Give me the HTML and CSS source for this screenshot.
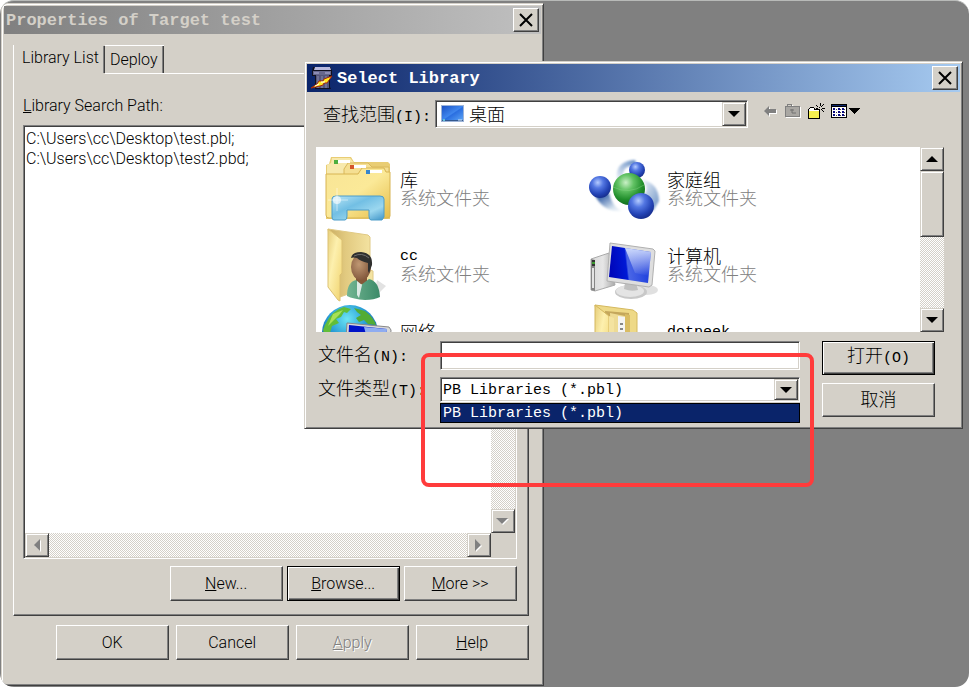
FILE: index.html
```html
<!DOCTYPE html>
<html lang="zh-CN">
<head>
<meta charset="utf-8">
<meta name="viewport" content="width=device-width, initial-scale=1">
<title>Select Library</title>
<link rel="stylesheet" href="styles.css">
</head>
<body>
<main class="desktop">

  <section class="window properties" aria-labelledby="properties-title">
    <header class="titlebar inactive">
      <h1 id="properties-title" class="title">Properties of Target test</h1>
      <button class="btn close" type="button" aria-label="Close">
        <svg width="14" height="14" viewBox="0 0 14 14"><path d="M1 1 13 13M13 1 1 13" stroke="#000" stroke-width="2"/></svg>
      </button>
    </header>

    <div class="sheet">
      <div class="tabs" role="tablist">
        <button class="tab current" type="button" role="tab" aria-selected="true">Library List</button>
        <button class="tab" type="button" role="tab" aria-selected="false">Deploy</button>
        <span class="tab-rest"></span>
      </div>
      <div class="page">
        <label class="page-label" for="paths"><u>L</u>ibrary Search Path:</label>
        <div class="sunken paths">
          <textarea id="paths" readonly>C:\Users\cc\Desktop\test.pbl;
C:\Users\cc\Desktop\test2.pbd;</textarea>
          <div class="scroll vertical">
            <button class="btn arrow" type="button" aria-label="Up" disabled><svg width="12" height="6" viewBox="0 0 12 6"><path d="M0 6 6 0 12 6z" fill="#808080"/></svg></button>
            <button class="btn arrow" type="button" aria-label="Down" disabled><svg width="13" height="7" viewBox="0 0 13 7"><path d="M1 1H13L7 7z" fill="#fff"/><path d="M0 0H12L6 6z" fill="#808080"/></svg></button>
          </div>
          <div class="scroll horizontal">
            <button class="btn arrow" type="button" aria-label="Left" disabled><svg width="7" height="13" viewBox="0 0 7 13"><path d="M7 1V13L1 7z" fill="#fff"/><path d="M6 0V12L0 6z" fill="#808080"/></svg></button>
            <button class="btn arrow" type="button" aria-label="Right" disabled><svg width="7" height="13" viewBox="0 0 7 13"><path d="M1 1V13L7 7z" fill="#fff"/><path d="M0 0V12L6 6z" fill="#808080"/></svg></button>
          </div>
        </div>
        <div class="actions">
          <button class="btn push" type="button"><u>N</u>ew...</button>
          <button class="btn push default" type="button"><u>B</u>rowse...</button>
          <button class="btn push" type="button"><u>M</u>ore &gt;&gt;</button>
        </div>
      </div>
    </div>

    <footer class="actions commands">
      <button class="btn push" type="button">OK</button>
      <button class="btn push" type="button">Cancel</button>
      <button class="btn push" type="button" disabled><u>A</u>pply</button>
      <button class="btn push" type="button"><u>H</u>elp</button>
    </footer>
  </section>

  <section class="window dialog" role="dialog" aria-labelledby="dialog-title">
    <header class="titlebar">
      <svg class="app-icon" width="22" height="24" viewBox="0 0 22 24">
        <path d="M2 1H20V3L21 4V10H19V21L20 23H4V10H1V5z" fill="#11111f"/>
        <path d="M4 1H19L20 4H3z" fill="#b9bade"/>
        <path d="M2 5H20V9H2z" fill="#66678c"/><path d="M3 7H8M14 7H19" stroke="#8c8db4" stroke-width="2"/>
        <path d="M5 9H18V22H5z" fill="#55567a"/><path d="M7 10V22M11 10V22M15 10V22" stroke="#8a8bac" stroke-width="1"/>
        <path d="M21 10 13 13 12 15 8 15 6 18 0 22 9 20 12 19 13 17 16 17z" fill="#ffe921" stroke="#a5250c" stroke-width="1"/>
        <path d="M10 16H14M4 20 8 18" stroke="#fff"/>
      </svg>
      <h2 id="dialog-title" class="title">Select Library</h2>
      <button class="btn close" type="button" aria-label="Close">
        <svg width="14" height="14" viewBox="0 0 14 14"><path d="M1 1 13 13M13 1 1 13" stroke="#000" stroke-width="2"/></svg>
      </button>
    </header>

    <div class="lookin">
      <label for="lookin">查找范围<span class="latin">(I):</span></label>
      <div class="sunken combo">
        <svg class="place" width="24" height="18" viewBox="0 0 24 18">
          <defs><linearGradient id="desk" x1="0" y1="0" x2="1" y2="1"><stop offset="0" stop-color="#1c52c4"/><stop offset=".5" stop-color="#3f86ee"/><stop offset=".55" stop-color="#2a6ee0"/><stop offset="1" stop-color="#5aa2f5"/></linearGradient></defs>
          <path d="M0 0H23V17H0z" fill="#9db4d8"/><path d="M1 1H22V15H1z" fill="url(#desk)"/><path d="M1 15H22V16H1z" fill="#34588e"/><path d="M2 14H4V16H2z" fill="#63c2d8"/><path d="M17 15H21" stroke="#cfe4f8"/>
        </svg>
        <select id="lookin" class="cjk"><option>桌面</option></select>
        <span class="btn arrow" aria-hidden="true"><svg width="12" height="6" viewBox="0 0 12 6"><path d="M0 0H12L6 6z"/></svg></span>
      </div>
      <div class="tools">
        <button type="button" aria-label="Back"><svg width="16" height="16" viewBox="0 0 16 16"><path d="M2 9 7 4V7H14V11H7V14z" fill="#fff"/><path d="M1 8 6 3V6H13V10H6V13z" fill="#808080"/></svg></button>
        <button type="button" aria-label="Up one level"><svg width="17" height="16" viewBox="0 0 17 16"><path d="M1 4H3L4 2H8L9 4H16V15H1z" fill="#fff"/><path d="M0 3H2V1H7V3H15V14H0z" fill="#808080"/><path d="M1 4H14V13H1z" fill="#a9a7a3"/><path d="M3 2H6V3H3z" fill="#d4d0c8"/><path d="M5 7H9M7 6V10H11" fill="none" stroke="#707070"/></svg></button>
        <button type="button" aria-label="New folder"><svg width="17" height="17" viewBox="0 0 17 17" shape-rendering="crispEdges"><path d="M0 6H1V5H2V4H6V5H7V6H12V16H0z"/><path d="M1 6H2V5H6V7H11V8H1z" fill="#fff"/><path d="M1 8H11V15H1z" fill="#f6f050"/><path d="M8 2H9V3H8zM9 3H10V4H9zM12 0H13V3H12zM15 1H16V2H15zM14 2H15V3H14zM13 3H14V4H13zM11 4H12V5H11zM14 5H17V6H14zM8 5H10V6H8zM13 6H14V7H13zM14 7H15V8H14zM15 8H16V9H15z"/></svg></button>
        <button type="button" aria-label="View menu"><svg width="30" height="16" viewBox="0 0 30 16" shape-rendering="crispEdges"><path d="M0 1H16V15H0z"/><path d="M1 4H15V14H1z" fill="#fff"/><path d="M1 2H15V3H1z" fill="#0a246a"/><path d="M2 5H4V7H2zM7 5H9V7H7zM11 5H13V7H11zM2 8H4V10H2zM7 8H9V10H7zM11 8H13V10H11zM2 11H4V13H2zM7 11H9V13H7zM11 11H13V13H11z" fill="#0a0a80"/><path d="M5 6H6V7H5zM9 6H10V7H9zM13 6H14V7H13zM5 9H6V10H5zM9 9H10V10H9zM13 9H14V10H13zM5 12H6V13H5zM9 12H10V13H9zM13 12H14V13H13z" fill="#444"/><path d="M18 5H29L24 11H23z"/></svg></button>
      </div>
    </div>

    <div class="files">
      <ul class="items">
        <li class="item">
          <svg width="76" height="76" viewBox="0 0 76 76">
            <defs>
              <linearGradient id="fold" x1="0" y1="0" x2="1" y2="1"><stop offset="0" stop-color="#f8e596"/><stop offset=".5" stop-color="#fbe998"/><stop offset="1" stop-color="#e5bd48"/></linearGradient>
              <linearGradient id="stand" x1="0" y1="0" x2="1" y2="1"><stop offset="0" stop-color="#bce7f6"/><stop offset=".4" stop-color="#72bfe4"/><stop offset=".7" stop-color="#9bd7ef"/><stop offset="1" stop-color="#3f94c8"/></linearGradient>
            </defs>
            <path d="M6 14 9 13 11 6H31L34 11H68L70 13V68H6z" fill="#e9cd74"/>
            <path d="M7 14 11 12 12 7H30L34 12 42 14V30H7z" fill="#f7e9ad"/>
            <path d="M24 18 28 12H48L52 16H69V32H24z" fill="#f5df92" stroke="#d9b95c" stroke-width="1"/>
            <path d="M6 23H38L42 17H64L66 21H70V65Q70 67 67 67H9Q6 67 6 64z" fill="url(#fold)" stroke="#d8b452" stroke-width="1"/>
            <path d="M14 9H30V12H14zM30 14H46V17H30zM46 19H62V22H46z" fill="#fff"/>
            <path d="M14 9H18V13H14z" fill="#4cae3e"/><path d="M30 14H34V18H30z" fill="#d4572a"/><path d="M46 19H50V23H46z" fill="#3786cd"/>
            <path d="M12 48Q12 45 16 45H60Q64 45 64 48V66L62 69H51Q49 69 49 65V59H27V65Q27 69 25 69H14Q12 69 12 66z" fill="url(#stand)" stroke="#4c9cc8" stroke-width="1"/>
            <path d="M17 37V60M8 49H28" stroke="#fff" opacity=".5"/><circle cx="17" cy="49" r="4" fill="#fff" opacity=".6"/>
          </svg>
          <p><span>库</span><small>系统文件夹</small></p>
        </li>
        <li class="item">
          <svg width="76" height="76" viewBox="0 0 76 76">
            <defs>
              <radialGradient id="blue" cx=".4" cy=".3" r=".7"><stop offset="0" stop-color="#b4cbff"/><stop offset=".35" stop-color="#5377e2"/><stop offset=".75" stop-color="#2444b6"/><stop offset="1" stop-color="#172f90"/></radialGradient>
              <radialGradient id="green" cx=".4" cy=".3" r=".7"><stop offset="0" stop-color="#c9f0c6"/><stop offset=".35" stop-color="#62c264"/><stop offset=".75" stop-color="#218e2c"/><stop offset="1" stop-color="#156e20"/></radialGradient>
              <linearGradient id="swoosh-left" x1="0" y1="0" x2="1" y2="1"><stop offset=".2" stop-color="#3d66aa"/><stop offset=".7" stop-color="#d5e2ee"/><stop offset="1" stop-color="#fff"/></linearGradient>
              <linearGradient id="swoosh-top" x1="1" y1="0" x2="0" y2="1"><stop offset="0" stop-color="#5d86bf"/><stop offset="1" stop-color="#f4f8fc"/></linearGradient>
              <linearGradient id="swoosh-right" x1="0" y1="0" x2="1" y2="1"><stop offset="0" stop-color="#f4f8fc"/><stop offset="1" stop-color="#6b91c4"/></linearGradient>
              <filter id="soft"><feGaussianBlur stdDeviation="1"/></filter>
            </defs>
            <g filter="url(#soft)">
              <path d="M8 44Q16 62 37 60Q26 58 22 42z" fill="url(#swoosh-left)"/>
              <path d="M30 30Q27 10 48 9L50 14Q36 14 36 24z" fill="url(#swoosh-top)"/>
              <path d="M54 28Q72 32 72 50L66 60Q60 48 56 44 64 38 54 28z" fill="url(#swoosh-right)"/>
            </g>
            <circle cx="50" cy="19" r="8" fill="url(#blue)"/><circle cx="13" cy="36" r="11" fill="url(#blue)"/><circle cx="42" cy="38" r="16" fill="url(#green)"/><circle cx="54" cy="55" r="13" fill="url(#blue)"/>
            <path d="M26 36Q42 44 57 34" fill="none" stroke="#8fd68c" opacity=".4"/>
          </svg>
          <p><span>家庭组</span><small>系统文件夹</small></p>
        </li>
        <li class="item">
          <svg width="76" height="76" viewBox="0 0 76 76">
            <defs>
              <linearGradient id="flap" x1="0" y1="0" x2="1" y2="1"><stop offset="0" stop-color="#e6cd7a"/><stop offset=".4" stop-color="#fdf0ae"/><stop offset="1" stop-color="#f0d26c"/></linearGradient>
              <linearGradient id="back"><stop offset="0" stop-color="#c9ad62"/><stop offset=".4" stop-color="#e2ca80"/><stop offset="1" stop-color="#f5e5a4"/></linearGradient>
              <linearGradient id="shirt"><stop offset="0" stop-color="#73b592"/><stop offset="1" stop-color="#3b8a68"/></linearGradient>
              <radialGradient id="face" cx=".4" cy=".4" r=".7"><stop offset="0" stop-color="#c09873"/><stop offset="1" stop-color="#7c5136"/></radialGradient>
            </defs>
            <path d="M53 72 66 59 57 53z" fill="#e2e2e2"/>
            <path d="M8 2 48 8 50 10V43L53 44V58L20 70z" fill="url(#back)" stroke="#e0c984" stroke-width="1"/>
            <path d="M8 2 22 13V46L20 48V74L18 73 8 60z" fill="url(#flap)" stroke="#dcc172" stroke-width="1"/>
            <path d="M36 48H47V57H36z" fill="#855839"/>
            <path d="M27 69Q27 55 36 53L41 58 49 52Q59 54 60 70Q54 73 45 73Q33 72 27 69z" fill="url(#shirt)"/>
            <path d="M37 54 42 58 39 71 37 68z" fill="#dce9e4"/>
            <ellipse cx="41" cy="40" rx="10" ry="13" fill="url(#face)"/>
            <path d="M31 31Q32 25 41 25Q53 26 52 38L49 46 48 44 48 36Q40 34 37 31Q33 30 31 31Z" fill="#30302f"/>
            <path d="M34 29Q42 25 49 31" stroke="#707070" fill="none"/>
          </svg>
          <p><span class="latin">cc</span><small>系统文件夹</small></p>
        </li>
        <li class="item">
          <svg width="76" height="76" viewBox="0 0 76 76">
            <defs>
              <linearGradient id="screen" x1="0" y1=".1" x2="1" y2="0"><stop offset="0" stop-color="#0007bb"/><stop offset=".36" stop-color="#0019d6"/><stop offset=".4" stop-color="#4a66e6"/><stop offset="1" stop-color="#1537db"/></linearGradient>
              <linearGradient id="shine" x1="0" y1="0" x2="0" y2="1"><stop offset="0" stop-color="#dce7ff" stop-opacity=".9"/><stop offset="1" stop-color="#fff" stop-opacity="0"/></linearGradient>
              <linearGradient id="tower"><stop offset="0" stop-color="#d8d8d8"/><stop offset=".5" stop-color="#e6e6e6"/><stop offset="1" stop-color="#a9a9a9"/></linearGradient>
            </defs>
            <ellipse cx="60" cy="63" rx="11" ry="5" fill="#ccc" opacity=".6"/>
            <path d="M4 32 22 26 28 58 8 64 4 63z" fill="url(#tower)" stroke="#aaa" stroke-width="1"/><path d="M4 32 8 33V64L4 63z" fill="#858585"/><path d="M5 33H8V39H5z" fill="#333"/><path d="M5 36H8" stroke="#3c9a2f" stroke-width="2"/><path d="M6 41V61" stroke="#e4e4e4" stroke-width="2"/>
            <ellipse cx="44" cy="65" rx="16" ry="7" fill="#c8c8c8"/><ellipse cx="43" cy="64" rx="14" ry="6" fill="#e4e4e4"/><path d="M38 56H49L51 63Q44 65 37 62z" fill="#c0c0c0"/>
            <path d="M23 16 66 22 68 24 65 58 62 60 20 54z" fill="#dedede" stroke="#b0b0b0" stroke-width="1"/>
            <path d="M25 19 64 25 61 56 22 50z" fill="url(#screen)"/>
            <path d="M38 21 64 25 62 49 48 46z" fill="url(#shine)"/>
          </svg>
          <p><span>计算机</span><small>系统文件夹</small></p>
        </li>
        <li class="item">
          <svg width="76" height="76" viewBox="0 0 76 76">
            <defs><radialGradient id="sea" cx=".45" cy=".25" r=".75"><stop offset="0" stop-color="#6ce5f4"/><stop offset=".45" stop-color="#289bd5"/><stop offset="1" stop-color="#103d92"/></radialGradient></defs>
            <circle cx="30" cy="30" r="28" fill="url(#sea)"/>
            <path d="M5 22Q12 7 24 4L31 6 27 10 24 9 21 14 16 16 19 20 12 23 10 30 5 33 3 27z" fill="#62bd39"/>
            <path d="M34 5 45 8Q54 15 56 22L48 21 44 17 39 19 36 15 41 12 37 9z" fill="#52ac35"/><path d="M13 11 23 7 19 12 13 18 8 23z" fill="#a8e156"/>
            <path d="M27 20 69 24 71 27 68 70 24 66z" fill="#d9d9d9" stroke="#888" stroke-width="1"/><path d="M29 22 67 26 65 66 27 62z" fill="#0013c8"/><path d="M44 24 67 26 66 45 49 43z" fill="#8facf0"/>
          </svg>
          <p><span>网络</span><small>系统文件夹</small></p>
        </li>
        <li class="item">
          <svg width="76" height="76" viewBox="0 0 76 76">
            <path d="M8 2 46 7 50 10V60L20 70z" fill="#eed987" stroke="#d5b95f" stroke-width="1"/>
            <path d="M18 8 42 10V62L20 68z" fill="#c4a75c"/><path d="M23 10 38 13V64L25 66z" fill="#eedb94"/><path d="M31 13 38 14V60H31z" fill="#f4f4f4"/><path d="M33 20H36V22H33zM33 25H36V27H33z" fill="#878787"/>
            <path d="M38 11 43 12V60H38z" fill="#d9bc63"/>
            <path d="M8 2 22 13V46L20 48V74L8 60z" fill="url(#flap)" stroke="#d4b75f" stroke-width="1"/><path d="M22 13 27 15V60H22z" fill="#f4e3a0"/>
          </svg>
          <p><span class="latin">dotpeek</span><small>文件夹</small></p>
        </li>
      </ul>
      <div class="scroll vertical">
        <button class="btn arrow" type="button" aria-label="Scroll up"><svg width="12" height="6" viewBox="0 0 12 6"><path d="M0 6 6 0 12 6z"/></svg></button>
        <span class="btn thumb"></span>
        <button class="btn arrow" type="button" aria-label="Scroll down"><svg width="12" height="6" viewBox="0 0 12 6"><path d="M0 0H12L6 6z"/></svg></button>
      </div>
    </div>

    <form class="form">
      <div class="fields">
        <label for="filename">文件名<span class="latin">(N):</span></label>
        <input id="filename" class="sunken latin" type="text">
        <label for="filetype">文件类型<span class="latin">(T):</span></label>
        <div class="sunken combo">
          <select id="filetype" class="latin"><option>PB Libraries (*.pbl)</option></select>
          <span class="btn arrow" aria-hidden="true"><svg width="12" height="6" viewBox="0 0 12 6"><path d="M0 0H12L6 6z"/></svg></span>
          <div class="menu latin" role="listbox" aria-label="文件类型"><div role="option" aria-selected="true">PB Libraries (*.pbl)</div></div>
        </div>
      </div>
      <div class="choices">
        <button class="btn push default" type="button"><span>打开<span class="latin">(O)</span></span></button>
        <button class="btn push" type="button"><span>取消</span></button>
      </div>
    </form>
  </section>

  <div class="highlight" aria-hidden="true"></div>
</main>
</body>
</html>
```
FILE: styles.css
```css
:root {
  --face: #d4d0c8;
  --shade: #808080;
  --dark: #404040;
  --navy: #0a246a;
  --ui: Roboto, "Liberation Sans", sans-serif;
  --cjk: "Noto Sans CJK SC", sans-serif;
  --mono: "Liberation Mono", "Noto Sans CJK SC", monospace;
}

* { box-sizing: border-box; }

body {
  margin: 0;
  background: #fff;
  color: #000;
  font: 300 16px/20px var(--ui);
}

button, select, input, textarea { font: inherit; color: inherit; }
svg { display: block; flex: none; }

.desktop {
  position: relative;
  height: 100vh;
  overflow: hidden;
  border-top: 1px solid #b8bab8;
  border-radius: 14px;
  background: var(--shade);
}

.latin { font-family: var(--mono); font-size: 15px; font-weight: 400; }
.cjk { font-family: var(--cjk); font-size: 18px; }

/* Windows */
.window {
  position: absolute;
  display: flex;
  flex-direction: column;
  padding: 2px;
  border: 1px solid;
  border-color: var(--face) var(--dark) var(--dark) var(--face);
  background: var(--face);
  box-shadow: inset 1px 1px #fff, inset -1px -1px var(--shade);
}

.properties { inset: 2px calc(44% - 1px) 1px 1px; border-radius: 6px 0 0 6px; }
.dialog { top: 60px; right: 6px; left: 304px; font-family: var(--cjk); font-size: 18px; }

.titlebar {
  display: flex;
  align-items: center;
  height: 28px;
  padding: 0 2px;
  background: linear-gradient(90deg, var(--navy), #a6caf0);
  color: #fff;
}
.titlebar.inactive { background: linear-gradient(90deg, #808080, #c0c0c0); color: var(--face); }
.title { flex: 1; margin: 0; padding-top: 2px; font: 700 17px/26px var(--mono); white-space: nowrap; }
.app-icon { margin: 0 4px 0 2px; }

/* Raised and sunken edges */
.btn {
  display: flex;
  align-items: center;
  justify-content: center;
  padding: 0;
  border: 1px solid;
  border-color: #fff var(--dark) var(--dark) #fff;
  border-radius: 0;
  background: var(--face);
  box-shadow: inset -1px -1px var(--shade);
}
.close { width: 26px; height: 24px; }
.push { width: 113px; height: 35px; }
.push.default {
  border-color: #000;
  box-shadow: inset 1px 1px #fff, inset -1px -1px var(--dark), inset -2px -2px var(--shade);
}
.push:disabled { color: var(--shade); text-shadow: 1px 1px #fff; }

.arrow {
  flex: none;
  width: 24px;
  height: 24px;
  border-color: var(--face) var(--dark) var(--dark) var(--face);
  box-shadow: inset 1px 1px #fff, inset -1px -1px var(--shade);
}

.sunken {
  border: 1px solid;
  border-color: var(--shade) #fff #fff var(--shade);
  border-radius: 0;
  background: #fff;
  box-shadow: inset 1px 1px var(--dark), inset -1px -1px var(--face);
}

.scroll {
  display: flex;
  justify-content: space-between;
  background: repeating-conic-gradient(#fff 0 25%, var(--face) 0 50%) 0 0 / 2px 2px;
}
.scroll.vertical { flex-direction: column; }

/* Properties window */
.sheet { flex: 1; display: flex; flex-direction: column; margin: 11px 12px 0 9px; }
.tabs { display: flex; height: 29px; border-left: 1px solid #fff; }
.tab {
  padding: 0 6px 0 5px;
  border: 1px solid #fff;
  border-width: 1px 0;
  background: none;
  box-shadow: inset -1px 0 var(--dark), inset -2px 0 var(--shade);
}
.tab.current { padding: 0 6px 4px 8px; border-color: transparent; }
.tab-rest { flex: 1; border-bottom: 1px solid #fff; }

.page {
  flex: 1;
  display: flex;
  flex-direction: column;
  padding: 22px 11px 14px 9px;
  border: 1px solid;
  border-color: transparent var(--dark) var(--dark) #fff;
  border-top: 0;
  box-shadow: inset -1px -1px var(--shade);
}
.page-label { margin-bottom: 9px; }

.paths {
  flex: 1;
  display: grid;
  grid-template: 1fr 24px / 1fr 24px;
  margin-bottom: 7px;
  padding: 1px;
  background: var(--face);
}
.paths textarea {
  padding: 2px 1px;
  border: 0;
  outline: 0;
  overflow: hidden;
  resize: none;
  background: #fff;
  white-space: pre;
}

.actions { display: flex; justify-content: flex-end; gap: 4px; }
.commands { gap: 7px; margin: 9px 12px 23px; }

/* Select Library dialog */
.lookin { display: flex; align-items: center; margin: 8px 16px 0; height: 28px; }
.lookin label { width: 112px; padding-top: 2px; }
.lookin .combo { flex: 1; height: 28px; }

.combo { position: relative; display: flex; align-items: center; padding: 1px; }
.combo .place { margin: 0 3px 0 4px; }
.combo select {
  flex: 1;
  min-width: 0;
  padding: 0 1px;
  border: 0;
  outline: 0;
  appearance: none;
  background: none;
}
.combo select.cjk { padding-bottom: 2px; }
.combo select.latin { padding-top: 2px; }
.combo .arrow { height: 100%; }

.tools { display: flex; align-items: center; gap: 6px; width: 196px; padding: 0 0 6px 15px; }
.tools button { padding: 0; border: 0; background: none; }

.files { display: flex; height: 185px; margin: 19px 16px 0 9px; background: #fff; }
.items {
  flex: 1;
  display: grid;
  grid-template-columns: 267px 1fr;
  grid-auto-rows: 76px;
  margin: 0;
  padding: 4px 0 0 4px;
  overflow: hidden;
  list-style: none;
}
.item { display: flex; align-items: center; gap: 4px; }
.item p { display: flex; flex-direction: column; margin: 0; padding-bottom: 2px; line-height: 18px; }
.item .latin { line-height: 22px; margin-bottom: -4px; }
.item small { color: var(--shade); font-size: 18px; }
.thumb {
  height: 66px;
  margin-bottom: auto;
  border-color: var(--face) var(--dark) var(--dark) var(--face);
  box-shadow: inset 1px 1px #fff, inset -1px -1px var(--shade);
}

.form { display: flex; gap: 22px; padding: 9px 25px 9px 11px; }
.fields {
  flex: 1;
  display: grid;
  grid-template: 29px 25px / 122px 1fr;
  gap: 7px 0;
  align-content: start;
  align-items: center;
}
.fields input { width: 100%; height: 100%; padding: 0 3px; outline: 0; }
.fields .combo { height: 100%; }
.choices { display: flex; flex-direction: column; gap: 8px; }
.choices .push { height: 34px; padding-bottom: 4px; }

.menu {
  position: absolute;
  top: 25px;
  right: -1px;
  left: -1px;
  border: 1px solid #000;
  background: var(--navy);
  color: #fff;
  line-height: 16px;
}
.menu div { padding: 2px 2px 0; }

.highlight {
  position: absolute;
  top: 352px;
  right: 155px;
  left: 421px;
  height: 134px;
  border: 4px solid #ff3b3b;
  border-radius: 8px;
}
```
